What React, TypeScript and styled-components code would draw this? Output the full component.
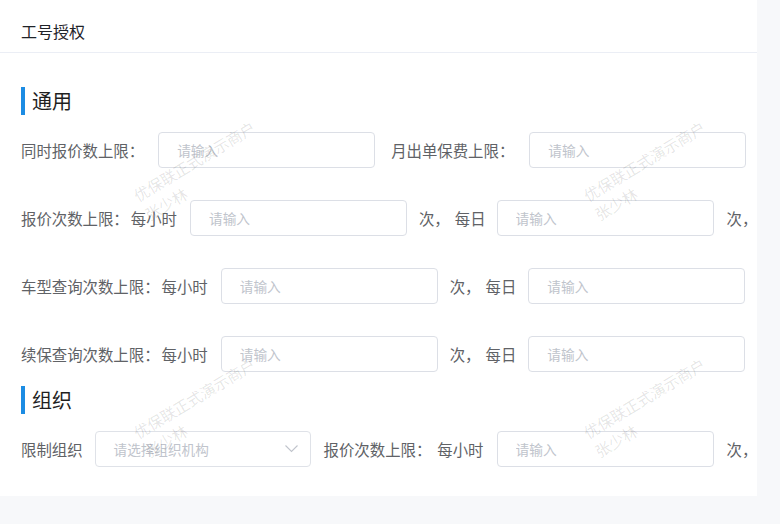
import styled, { createGlobalStyle } from 'styled-components';

const GlobalStyle = createGlobalStyle`
  html, body {
    margin: 0;
    padding: 0;
    background: #f7f8fa;
  }

  body {
    font-family: "Noto Sans CJK SC", "Noto Sans", sans-serif;
  }
`;

const Card = styled.div`
  position: relative;
  width: 757px;
  background: #fff;
  overflow: hidden;
`;

const Header = styled.div`
  padding: 20px 21px 10px;
  font-size: 16px;
  line-height: 22px;
  color: #1f2329;
  border-bottom: 1px solid #ebeef5;
`;

const Body = styled.div`
  padding: 34px 0 29px 21px;
`;

const SectionTitle = styled.div<{ $top?: number }>`
  display: flex;
  align-items: center;
  height: 28px;
  margin-top: ${({ $top = 0 }) => $top}px;
  margin-bottom: 17px;
  font-size: 20px;
  line-height: 28px;
  color: #1f1f1f;

  &::before {
    content: '';
    width: 4px;
    height: 28px;
    margin-right: 7px;
    background: #1c8ce3;
  }
`;

const Row = styled.div`
  display: flex;
  align-items: center;
  height: 36px;
  white-space: nowrap;

  & + & {
    margin-top: 32px;
  }
`;

const Field = styled.div<{ $offset?: number }>`
  display: flex;
  align-items: center;
  margin-left: ${({ $offset = 0 }) => $offset}px;
`;

const Label = styled.span<{ $gap?: number }>`
  margin-right: ${({ $gap = 0 }) => $gap}px;
  font-size: 15.4px;
  line-height: 22px;
  color: #606266;
`;

const Unit = styled.span<{ $left?: number; $right?: number }>`
  margin-left: ${({ $left = 0 }) => $left}px;
  margin-right: ${({ $right = 0 }) => $right}px;
  font-size: 15.4px;
  line-height: 22px;
  color: #606266;
`;

const TextInput = styled.input`
  box-sizing: border-box;
  width: 217px;
  height: 36px;
  padding: 0 18px;
  border: 1px solid #dcdfe6;
  border-radius: 4px;
  outline: none;
  background: #fff;
  font-family: inherit;
  font-size: 13.7px;
  color: #606266;

  &::placeholder {
    color: #c0c4cc;
  }
`;

const Select = styled.div`
  box-sizing: border-box;
  display: flex;
  align-items: center;
  justify-content: space-between;
  width: 216px;
  height: 36px;
  padding: 0 12px 0 18px;
  border: 1px solid #dfe2e8;
  border-radius: 4px;
  font-size: 13.6px;
  color: #c0c4cc;
  cursor: pointer;
`;

const Overlay = styled.div`
  position: absolute;
  inset: 0;
  pointer-events: none;
  overflow: hidden;
`;

const Mark = styled.div<{ $x: number; $y: number }>`
  position: absolute;
  left: ${({ $x }) => $x}px;
  top: ${({ $y }) => $y}px;
  transform: rotate(-31deg);
  transform-origin: 0 0;
  font-size: 15.4px;
  line-height: 22px;
  white-space: nowrap;
  color: rgba(0, 0, 0, 0.11);
  user-select: none;
`;

const Chevron = () => (
  <svg width="13" height="8" viewBox="0 0 13 8" fill="none">
    <path d="M0.5 0.5L6.5 6.5L12.5 0.5" stroke="#c0c4cc" strokeWidth="1.1" />
  </svg>
);

const marks = [
  { x: 129, y: 187 },
  { x: 579, y: 187 },
  { x: 129, y: 424 },
  { x: 579, y: 424 },
];

const Num = () => <TextInput placeholder="请输入" />;

// 每小时 ___ 次，每日 ___
const HourDay = () => (
  <>
    <Num />
    <Unit $left={12}>次，</Unit>
    <Unit $left={5} $right={12}>每日</Unit>
    <Num />
  </>
);

export default function App() {
  return (
    <>
      <GlobalStyle />
      <Card>
        <Header>工号授权</Header>
        <Body>
          <SectionTitle>通用</SectionTitle>
          <Row>
            <Field>
              <Label $gap={14}>同时报价数上限：</Label>
              <Num />
            </Field>
            <Field $offset={16}>
              <Label $gap={15}>月出单保费上限：</Label>
              <Num />
            </Field>
          </Row>
          <Row>
            <Field>
              <Label>报价次数上限：</Label>
              <Unit $left={2} $right={13}>每小时</Unit>
              <Num />
              <Unit $left={12}>次，</Unit>
              <Unit $left={5} $right={11}>每日</Unit>
              <Num />
              <Unit $left={13}>次，</Unit>
            </Field>
          </Row>
          <Row>
            <Field>
              <Label>车型查询次数上限：</Label>
              <Unit $left={2} $right={13}>每小时</Unit>
              <HourDay />
            </Field>
          </Row>
          <Row>
            <Field>
              <Label>续保查询次数上限：</Label>
              <Unit $left={2} $right={13}>每小时</Unit>
              <HourDay />
            </Field>
          </Row>

          <SectionTitle $top={14}>组织</SectionTitle>
          <Row>
            <Field>
              <Label $gap={12}>限制组织</Label>
              <Select>
                <span>请选择组织机构</span>
                <Chevron />
              </Select>
            </Field>
            <Field $offset={13}>
              <Label>报价次数上限：</Label>
              <Unit $left={6} $right={13}>每小时</Unit>
              <Num />
              <Unit $left={13}>次，</Unit>
            </Field>
          </Row>
        </Body>
        <Overlay>
          {marks.map((m, i) => (
            <Mark key={i} $x={m.x} $y={m.y}>
              优保联正式演示商户
              <br />
              张少林
            </Mark>
          ))}
        </Overlay>
      </Card>
    </>
  );
}
